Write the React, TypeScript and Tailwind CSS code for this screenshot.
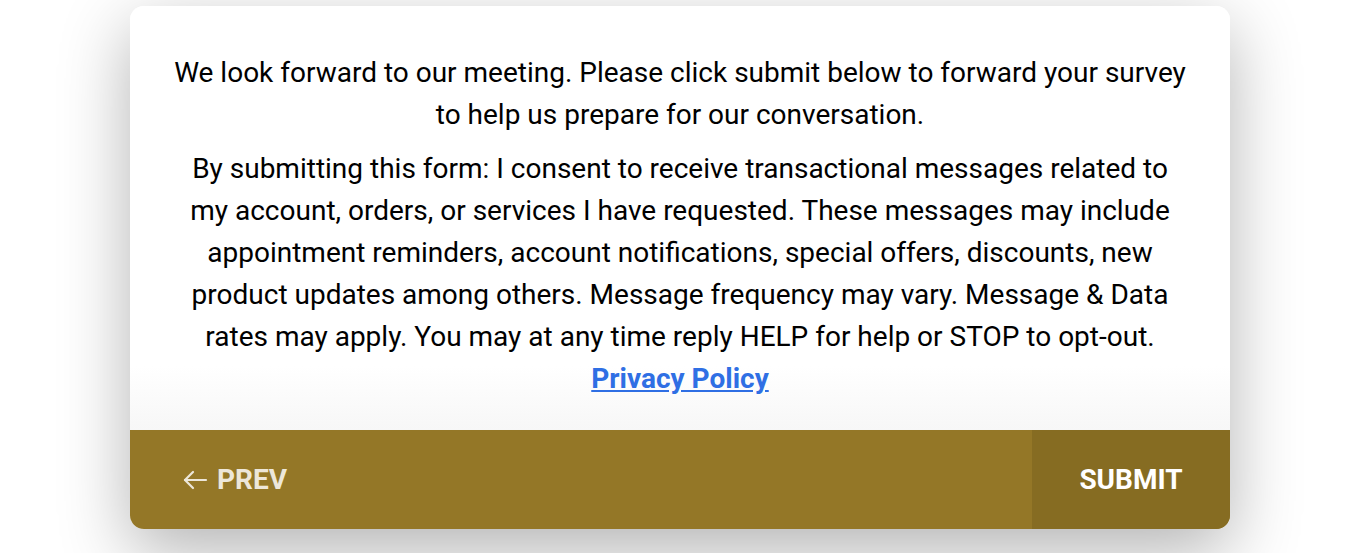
export default function App() {
  return (
    <div className="flex min-h-[553px] w-full items-start bg-white pl-[130px] pt-[6px] font-['Roboto',sans-serif]">
      <div className="flex w-[1100px] flex-col overflow-hidden rounded-[14px] bg-white shadow-[0_22px_70px_rgba(0,0,0,0.3)]">
        <div className="bg-gradient-to-b from-white from-85% to-[#f7f7f7] px-6 pb-[30px] pt-[46px] text-center text-[28px] leading-[42px] text-black">
          <p>
            We look forward to our meeting. Please click submit below to forward your survey
            <br />
            to help us prepare for our conversation.
          </p>
          <p className="mt-[12px]">
            By submitting this form: I consent to receive transactional messages related to
            <br />
            my account, orders, or services I have requested. These messages may include
            <br />
            appointment reminders, account notifications, special offers, discounts, new
            <br />
            product updates among others. Message frequency may vary. Message &amp; Data
            <br />
            rates may apply. You may at any time reply HELP for help or STOP to opt-out.
            <br />
            <a href="#" className="font-bold text-[#2f6fe4] underline underline-offset-2">
              Privacy Policy
            </a>
          </p>
        </div>
        <div className="flex h-[99px] bg-[#947727]">
          <button
            type="button"
            className="flex flex-1 items-center gap-[9px] pl-[52px] text-[28px] font-bold text-[#ede7d9]"
          >
            <svg width="26" height="22" viewBox="0 0 26 22" fill="none" stroke="currentColor" strokeWidth="2.2" strokeLinecap="round" strokeLinejoin="round">
              <path d="M24 11H3" />
              <path d="M11 3L3 11L11 19" />
            </svg>
            PREV
          </button>
          <button
            type="button"
            className="flex w-[198px] items-center justify-center bg-[#866c22] text-[28px] font-bold text-white"
          >
            SUBMIT
          </button>
        </div>
      </div>
    </div>
  );
}
